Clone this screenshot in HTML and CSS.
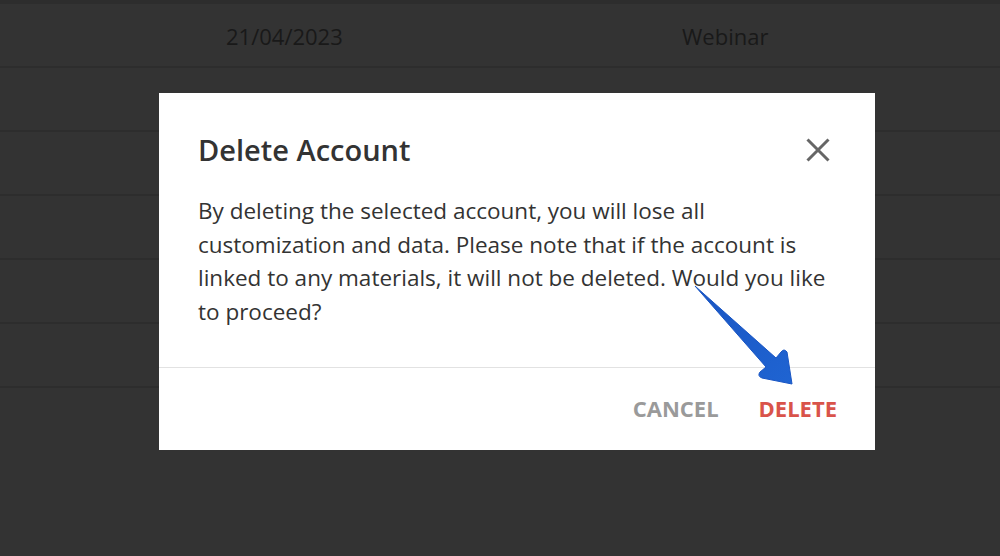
FILE: index.html
```html
<!DOCTYPE html>
<html>
<head>
<meta charset="utf-8">
<link rel="stylesheet" href="styles.css">
</head>
<body>
<div class="page">
  <div class="table">
    <div class="row"><span class="c1">21/04/2023</span><span class="c2">Webinar</span></div>
    <div class="row"><span class="c1">21/04/2023</span><span class="c2">Webinar</span></div>
    <div class="row"><span class="c1">21/04/2023</span><span class="c2">Webinar</span></div>
    <div class="row"><span class="c1">21/04/2023</span><span class="c2">Webinar</span></div>
    <div class="row"><span class="c1">21/04/2023</span><span class="c2">Webinar</span></div>
    <div class="row"><span class="c1">21/04/2023</span><span class="c2">Webinar</span></div>
  </div>
  <div class="modal">
    <div class="modal-head">
      <h2 class="title">Delete Account</h2>
      <svg class="close" width="24" height="24" viewBox="0 0 24 24"><path d="M1.5 1.5 L22.5 22.5 M22.5 1.5 L1.5 22.5" stroke="#666" stroke-width="3" fill="none"/></svg>
    </div>
    <p class="msg">By deleting the selected account, you will lose all customization and data. Please note that if the account is linked to any materials, it will not be deleted. Would you like to proceed?</p>
    <div class="modal-foot">
      <span class="btn cancel">CANCEL</span>
      <span class="btn delete">DELETE</span>
    </div>
  </div>
  <svg class="arrow" width="1000" height="556" viewBox="0 0 1000 556">
    <defs>
      <linearGradient id="g" x1="0" y1="0" x2="1" y2="1">
        <stop offset="0" stop-color="#1a55c2"/>
        <stop offset="1" stop-color="#1f64d2"/>
      </linearGradient>
    </defs>
    <path d="M695 286 L776 358 L781 352 Q784 348 787 352 L792 384 L762 378 Q757 376 760 372 L766 367 Z" fill="url(#g)" stroke="#1a56c4" stroke-width="1" stroke-linejoin="round"/>
  </svg>
</div>
</body>
</html>
```
FILE: styles.css
```css
html, body {
  margin: 0;
  padding: 0;
}
body {
  background: #333333;
  font-family: "Open Sans", "Liberation Sans", sans-serif;
  width: 1000px;
  height: 556px;
  overflow: hidden;
}
.page {
  position: relative;
  width: 1000px;
  height: 556px;
}
.table {
  border-top: 4px solid #2d2d2d;
}
.row {
  height: 60px;
  padding-top: 2px;
  border-bottom: 2px solid #2d2d2d;
  display: flex;
  align-items: center;
  font-size: 22px;
  color: #191919;
}
.c1 {
  margin-left: 226px;
  width: 456px;
}
.modal {
  position: absolute;
  left: 159px;
  top: 93px;
  width: 716px;
  height: 357px;
  background: #fff;
  display: flex;
  flex-direction: column;
}
.modal-head {
  display: flex;
  justify-content: space-between;
  align-items: center;
  padding: 37px 45px 0 39px;
}
.title {
  margin: 0;
  font-size: 29px;
  font-weight: 600;
  color: #333;
  line-height: 40px;
}
.close {
  display: block;
}
.msg {
  margin: 0;
  padding: 24px 41px 0 39px;
  font-size: 22.5px;
  line-height: 33.5px;
  color: #333;
}
.modal-foot {
  margin-top: auto;
  border-top: 1px solid #e2e2e2;
  height: 80px;
  padding-bottom: 2px;
  display: flex;
  justify-content: flex-end;
  align-items: center;
  gap: 40px;
  padding-right: 38px;
}
.btn {
  font-size: 22px;
  font-weight: 700;
}
.cancel {
  color: #9a9a9a;
}
.delete {
  color: #d9534a;
}
.arrow {
  position: absolute;
  left: 0;
  top: 0;
  pointer-events: none;
}
```
